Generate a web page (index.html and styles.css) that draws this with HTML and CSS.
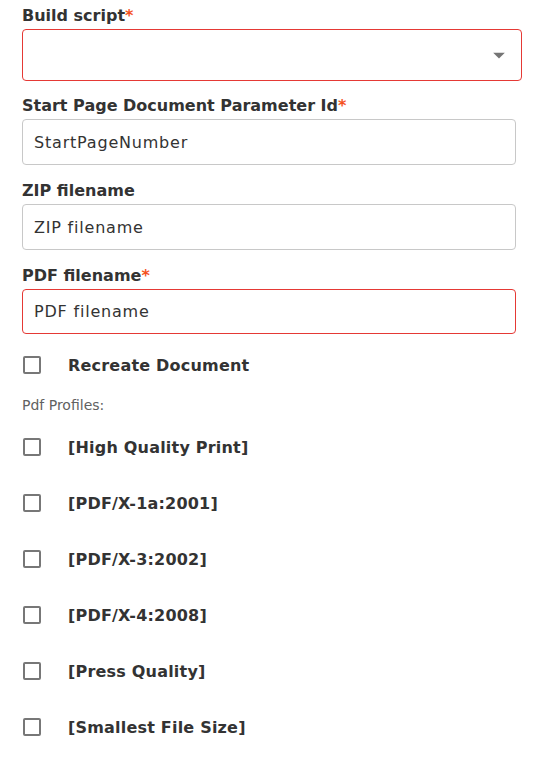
FILE: index.html
```html
<!DOCTYPE html>
<html>
<head>
<meta charset="utf-8">
<link rel="stylesheet" href="styles.css">
</head>
<body>
<div class="form">
  <div class="field">
    <div class="label">Build script<span class="req">*</span></div>
    <div class="select error">
      <svg class="arrow" width="28" height="28" viewBox="0 0 24 24"><path d="M7 10l5 5 5-5z" fill="#757575"/></svg>
    </div>
  </div>
  <div class="field">
    <div class="label">Start Page Document Parameter Id<span class="req">*</span></div>
    <div class="input">StartPageNumber</div>
  </div>
  <div class="field">
    <div class="label">ZIP filename</div>
    <div class="input">ZIP filename</div>
  </div>
  <div class="field">
    <div class="label">PDF filename<span class="req">*</span></div>
    <div class="input error">PDF filename</div>
  </div>
  <div class="check-row first">
    <span class="box"></span>
    <span class="check-label">Recreate Document</span>
  </div>
  <div class="section">Pdf Profiles:</div>
  <div class="check-row">
    <span class="box"></span>
    <span class="check-label">[High Quality Print]</span>
  </div>
  <div class="check-row">
    <span class="box"></span>
    <span class="check-label">[PDF/X-1a:2001]</span>
  </div>
  <div class="check-row">
    <span class="box"></span>
    <span class="check-label">[PDF/X-3:2002]</span>
  </div>
  <div class="check-row">
    <span class="box"></span>
    <span class="check-label">[PDF/X-4:2008]</span>
  </div>
  <div class="check-row">
    <span class="box"></span>
    <span class="check-label">[Press Quality]</span>
  </div>
  <div class="check-row">
    <span class="box"></span>
    <span class="check-label">[Smallest File Size]</span>
  </div>
</div>
</body>
</html>
```
FILE: styles.css
```css
html, body {
  margin: 0;
  padding: 0;
  background: #ffffff;
}
body {
  font-family: "DejaVu Sans", sans-serif;
  color: #333333;
}
.form {
  padding: 4px 0 0 22px;
  width: 500px;
}
.field {
  margin-bottom: 14px;
  display: flex;
  flex-direction: column;
  gap: 1px;
}
.field:first-child {
  margin-bottom: 13px;
}
.label {
  font-size: 16px;
  font-weight: bold;
  line-height: 24px;
  color: #333333;
}
.req {
  color: #f4511e;
}
.select {
  box-sizing: border-box;
  height: 52px;
  width: 500px;
  border: 1px solid #bdbdbd;
  border-radius: 4px;
  display: flex;
  align-items: center;
  justify-content: flex-end;
  padding-right: 8px;
}
.arrow {
  display: block;
}
.input {
  box-sizing: border-box;
  height: 46px;
  width: 494px;
  border: 1px solid #c8c8c8;
  border-radius: 4px;
  padding: 0 11px;
  display: flex;
  align-items: center;
  font-size: 16px;
  letter-spacing: 0.8px;
  color: #333333;
}
.field:nth-child(4) .input {
  height: 45px;
}
.error {
  border-color: #e53935;
}
.check-row {
  height: 56px;
  display: flex;
  align-items: center;
}
.check-row.first {
  margin-top: -11px;
}
.box {
  box-sizing: border-box;
  width: 18px;
  height: 18px;
  margin-left: 1px;
  border: 2px solid #777777;
  border-radius: 2px;
  flex: none;
}
.check-label {
  margin-left: 27px;
  font-size: 16px;
  font-weight: bold;
  letter-spacing: 0.2px;
  color: #333333;
}
.section {
  height: 26px;
  line-height: 24px;
  font-size: 14px;
  color: #616161;
}
```
